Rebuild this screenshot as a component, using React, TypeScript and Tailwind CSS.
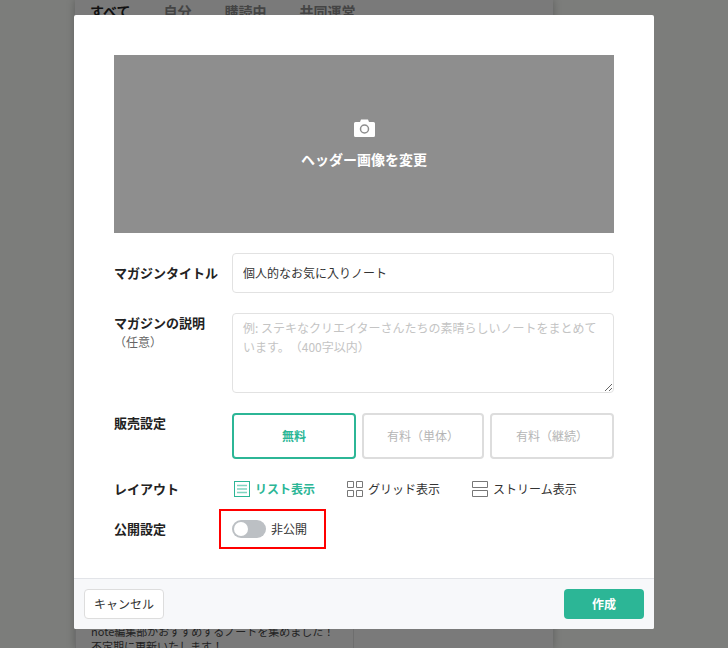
import React from 'react';

const jpFont = "font-['Noto_Sans_CJK_JP','Noto_Sans',sans-serif]";

const CameraIcon = () => (
  <svg width="21" height="18" viewBox="0 0 21 18" className="shrink-0">
    <path d="M1.5 3H6L7 .5h7L15 3h4.5A1.5 1.5 0 0 1 21 4.5v12a1.5 1.5 0 0 1-1.5 1.5h-18A1.5 1.5 0 0 1 0 16.500v-12A1.500 1.500 0 0 1 1.500 3z" fill="#fff" />
    <circle cx="10.500" cy="10" r="4" fill="#fff" stroke="#8e8e8e" strokeWidth="1.500" />
  </svg>
);

const ListIcon = () => (
  <svg width="16" height="16" viewBox="0 0 16 16" fill="none" className="shrink-0">
    <rect x="0.5" y="0.5" width="15" height="15" stroke="#2cb696" />
    <path d="M3 4.5h10M3 8h10M3 11.5h10" stroke="#2cb696" strokeWidth="1.5" opacity="0.6" />
  </svg>
);

const GridIcon = () => (
  <svg width="16" height="16" viewBox="0 0 16 16" fill="none" className="shrink-0">
    <path d="M.5.5h6v6h-6zM9.5.5h6v6h-6zM.5 9.5h6v6h-6zM9.5 9.5h6v6h-6z" stroke="#777" />
  </svg>
);

const StreamIcon = () => (
  <svg width="16" height="16" viewBox="0 0 16 16" fill="none" className="shrink-0">
    <path d="M.5.5h15v6h-15zM.5 9.5h15v6h-15z" stroke="#777" />
  </svg>
);

const PriceOption: React.FC<{ label: string; className: string; active?: boolean }> = ({ label, className, active }) => (
  <button
    className={`h-[46px] rounded border-2 bg-white text-xs ${className} ${
      active ? 'border-[#2cb696] font-bold text-[#2cb696]' : 'border-[#ddd] text-[#b5b5b5]'
    }`}
  >
    {label}
  </button>
);

const App: React.FC = () => {
  return (
    <div className={`relative h-[648px] w-[728px] overflow-hidden bg-[#7c7d7b] [text-spacing-trim:space-all] ${jpFont}`}>
      {/* page behind the overlay */}
      <div className="ml-[75px] w-[478px] bg-[#7a7a7a] shadow-[0_0_8px_rgba(0,0,0,0.25)]">
        <div className="flex h-[15px] gap-[33px] overflow-hidden pl-[15px] pt-[1px] text-sm font-bold leading-[20px] text-[#444]">
          <span className="text-[#111]">すべて</span>
          <span>自分</span>
          <span>購読中</span>
          <span>共同運営</span>
        </div>
        <div className="mt-[609px] h-[24px] w-[279px] border-x border-[#6e6e6e] px-[15px] text-[11px] leading-[15px] text-[#222]">
          <p className="whitespace-nowrap">note編集部がおすすめするノートを集めました！</p>
          <p>不定期に更新いたします！</p>
        </div>
      </div>

      {/* modal */}
      <div className="absolute left-[74px] top-[15px] w-[580px] rounded-[2px] bg-white">
        <div className="px-10 pt-10 pb-[29px]">
          <div className="flex h-[178px] flex-col items-center justify-center bg-[#8e8e8e] text-white">
            <CameraIcon />
            <span className="mt-3 text-sm font-bold">ヘッダー画像を変更</span>
          </div>

          <div className="mt-5 flex items-center">
            <div className="w-[118px] shrink-0 text-[13px] font-bold text-[#222]">マガジンタイトル</div>
            <input
              readOnly
              value="個人的なお気に入りノート"
              className="h-10 flex-1 rounded border border-[#e2e2e2] px-2.5 pb-[2px] text-xs text-[#333] outline-none"
            />
          </div>

          <div className="mt-5 flex">
            <div className="w-[118px] shrink-0">
              <div className="text-[13px] font-bold leading-5 text-[#222]">マガジンの説明</div>
              <div className="text-xs leading-[18px] text-[#666]">（任意）</div>
            </div>
            <textarea
              readOnly
              placeholder="例: ステキなクリエイターさんたちの素晴らしいノートをまとめています。（400字以内）"
              className="h-20 flex-1 rounded border border-[#e2e2e2] px-2.5 py-1 text-xs leading-[19px] outline-none placeholder:text-[#c4c4c4]"
            />
          </div>

          <div className="mt-5 flex">
            <div className="w-[118px] shrink-0 text-[13px] font-bold text-[#222]">販売設定</div>
            <div className="flex flex-1 gap-[6px]">
              <PriceOption label="無料" className="w-[124px]" active />
              <PriceOption label="有料（単体）" className="w-[122px]" />
              <PriceOption label="有料（継続）" className="w-[124px]" />
            </div>
          </div>

          <div className="mt-[22px] flex h-[16px] items-center">
            <div className="w-[118px] shrink-0 text-[13px] font-bold text-[#222]">レイアウト</div>
            <div className="flex items-center gap-[5px] pl-[2px] text-xs">
              <ListIcon />
              <span className="font-bold text-[#2cb696]">リスト表示</span>
            </div>
            <div className="ml-8 flex items-center gap-[5px] text-xs text-[#333]">
              <GridIcon />
              <span>グリッド表示</span>
            </div>
            <div className="ml-8 flex items-center gap-[5px] text-xs text-[#333]">
              <StreamIcon />
              <span>ストリーム表示</span>
            </div>
          </div>

          <div className="mt-3 flex items-center">
            <div className="w-[105px] shrink-0 text-[13px] font-bold text-[#222]">公開設定</div>
            <div className="flex h-10 w-[107px] items-center gap-[5px] border-2 border-[#f00] pl-[11px] text-xs text-[#333]">
              <span className="flex h-[18px] w-[34px] items-center rounded-full bg-[#bcc0c4] px-[2px]">
                <span className="h-[14px] w-[14px] rounded-full bg-white" />
              </span>
              <span>非公開</span>
            </div>
          </div>
        </div>

        <div className="flex h-[51px] items-center justify-between rounded-b-[2px] border-t border-[#e2e4e8] bg-[#f7f8fa] px-[10px]">
          <button className="h-[30px] w-20 rounded border border-[#ddd] bg-white text-xs text-[#333]">
            キャンセル
          </button>
          <button className="h-[30px] w-20 rounded bg-[#2cb696] text-xs font-bold text-white">作成</button>
        </div>
      </div>
    </div>
  );
};

export default App;
